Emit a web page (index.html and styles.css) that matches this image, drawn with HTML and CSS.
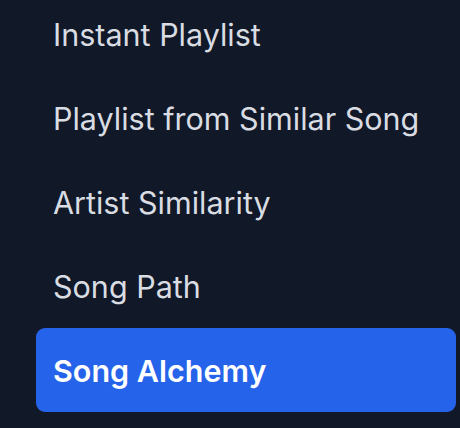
FILE: index.html
```html
<!DOCTYPE html>
<html lang="en">
<head>
  <meta charset="UTF-8" />
  <meta name="viewport" content="width=device-width, initial-scale=1.0" />
  <title>Menu</title>
  <link rel="stylesheet" href="styles.css">
</head>
<body>
  <nav class="menu">
    <a href="#" class="item">Instant Playlist</a>
    <a href="#" class="item">Playlist from Similar Song</a>
    <a href="#" class="item">Artist Similarity</a>
    <a href="#" class="item">Song Path</a>
    <a href="#" class="item active">Song Alchemy</a>
  </nav>
</body>
</html>
```

FILE: styles.css
```css
* { box-sizing: border-box; }
body, html { margin: 0; padding: 0; width: 100%; height: 100%; }
body {
  background: #111827;
  font-family: Inter, "Noto Sans", sans-serif;
  overflow: hidden;
}
.menu {
  display: flex;
  flex-direction: column;
  margin-top: -8px;
  padding: 0 4px 0 36px;
}
.item {
  display: flex;
  align-items: center;
  height: 84px;
  padding: 0 17px;
  border-radius: 9px;
  color: #d9dde3;
  font-size: 30.5px;
  text-decoration: none;
}
.item.active {
  background: #2563eb;
  color: #fff;
  font-weight: 600;
}
```
